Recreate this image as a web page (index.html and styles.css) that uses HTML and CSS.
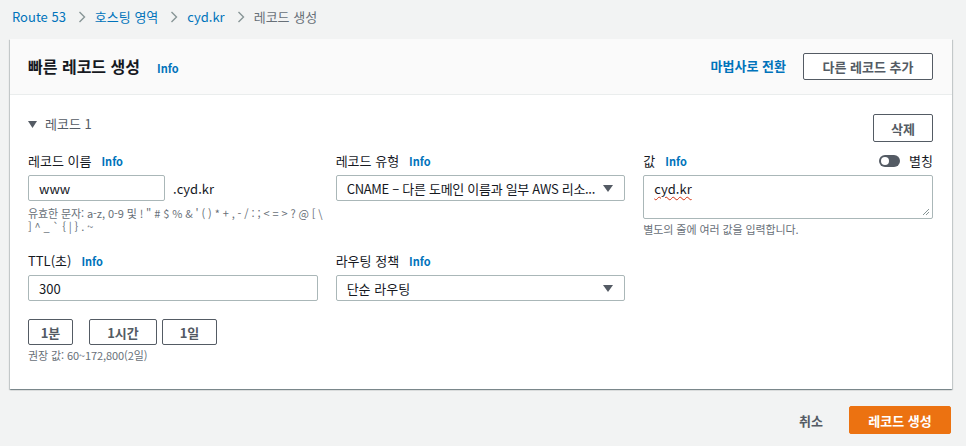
FILE: index.html
```html
<!DOCTYPE html>
<html lang="ko">
<head>
<meta charset="utf-8">
<title>레코드 생성</title>
<link rel="stylesheet" href="styles.css">
</head>
<body>
  <nav class="crumbs">
    <a class="crumb-link">Route 53</a>
    <svg class="chev" width="8" height="12" viewBox="0 0 8 12"><polyline points="1.5,1 6.5,6 1.5,11" fill="none" stroke="#879596" stroke-width="1.4"/></svg>
    <a class="crumb-link">호스팅 영역</a>
    <svg class="chev" width="8" height="12" viewBox="0 0 8 12"><polyline points="1.5,1 6.5,6 1.5,11" fill="none" stroke="#879596" stroke-width="1.4"/></svg>
    <a class="crumb-link">cyd.kr</a>
    <svg class="chev" width="8" height="12" viewBox="0 0 8 12"><polyline points="1.5,1 6.5,6 1.5,11" fill="none" stroke="#879596" stroke-width="1.4"/></svg>
    <span class="crumb-current">레코드 생성</span>
  </nav>

  <section class="card">
    <header class="card-head">
      <div class="title-wrap">
        <h1 class="title">빠른 레코드 생성</h1>
        <a class="info">Info</a>
      </div>
      <div class="head-actions">
        <a class="wizard-link">마법사로 전환</a>
        <button class="btn">다른 레코드 추가</button>
      </div>
    </header>

    <div class="card-body">
      <div class="record-head">
        <div class="record-toggle">
          <svg width="9" height="7" viewBox="0 0 9 7"><polygon points="0,0 9,0 4.5,7" fill="#545b64"/></svg>
          <span>레코드 1</span>
        </div>
        <button class="btn btn-del">삭제</button>
      </div>

      <div class="fields">
        <div class="field">
          <div class="label-row"><span class="label">레코드 이름</span><a class="info">Info</a></div>
          <div class="name-row">
            <div class="input input-name">www</div>
            <span class="suffix">.cyd.kr</span>
          </div>
          <p class="hint hint-chars">유효한 문자: a-z, 0-9 및 ! " # $ % &amp; ' ( ) * + , - / : ; &lt; = &gt; ? @ [ \<br>] ^ _ ` { | } . ~</p>
        </div>

        <div class="field">
          <div class="label-row"><span class="label">레코드 유형</span><a class="info">Info</a></div>
          <div class="select">
            <span class="select-text select-long">CNAME – 다른 도메인 이름과 일부 AWS 리소...</span>
            <svg class="caret" width="10" height="7" viewBox="0 0 10 7"><polygon points="0,0 10,0 5,7" fill="#545b64"/></svg>
          </div>
        </div>

        <div class="field">
          <div class="label-row label-row-split">
            <div class="label-group"><span class="label">값</span><a class="info">Info</a></div>
            <div class="alias">
              <span class="switch"><span class="knob"></span></span>
              <span class="label">별칭</span>
            </div>
          </div>
          <div class="textarea">
            <span class="misspelled">cyd.kr</span>
            <svg class="grip" width="8" height="8" viewBox="0 0 8 8"><path d="M7 1 L1 7 M7 4 L4 7" stroke="#879596" stroke-width="1"/></svg>
          </div>
          <p class="hint hint-value">별도의 줄에 여러 값을 입력합니다.</p>
        </div>

        <div class="field">
          <div class="label-row"><span class="label">TTL(초)</span><a class="info">Info</a></div>
          <div class="input">300</div>
          <div class="ttl-presets">
            <button class="btn btn-ttl btn-min">1분</button>
            <button class="btn btn-ttl btn-hour">1시간</button>
            <button class="btn btn-ttl btn-day">1일</button>
          </div>
          <p class="hint hint-ttl">권장 값: 60~172,800(2일)</p>
        </div>

        <div class="field">
          <div class="label-row"><span class="label">라우팅 정책</span><a class="info">Info</a></div>
          <div class="select">
            <span class="select-text">단순 라우팅</span>
            <svg class="caret" width="10" height="7" viewBox="0 0 10 7"><polygon points="0,0 10,0 5,7" fill="#545b64"/></svg>
          </div>
        </div>
      </div>
    </div>
  </section>

  <footer class="page-actions">
    <a class="cancel">취소</a>
    <button class="btn btn-primary">레코드 생성</button>
  </footer>
</body>
</html>
```

FILE: styles.css
```css
* {
  box-sizing: border-box;
}

body {
  margin: 0;
  background: #f2f3f3;
  font-family: "Noto Sans CJK KR", "Noto Sans", sans-serif;
  font-size: 13px;
  color: #16191f;
}

p {
  margin: 0;
}

button {
  font-family: inherit;
}

/* breadcrumbs */
.crumbs {
  height: 39px;
  padding: 7px 0 0 12px;
  display: flex;
  align-items: flex-start;
  line-height: 20px;
  font-size: 13px;
}

.crumb-link {
  color: #0073bb;
}

.crumb-current {
  color: #687078;
}

.chev {
  margin: 4px 9px 0 12px;
}

/* card */
.card {
  margin: 0 14px 0 10px;
  background: #fff;
  box-shadow: 0 1px 1px 0 rgba(0, 28, 36, 0.3), 1px 1px 1px 0 rgba(0, 28, 36, 0.15), -1px 1px 1px 0 rgba(0, 28, 36, 0.15);
}

.card-head {
  height: 56px;
  padding: 0 19px 0 18px;
  background: #fafafa;
  border-bottom: 1px solid #eaeded;
  display: flex;
  align-items: center;
  justify-content: space-between;
}

.title-wrap {
  display: flex;
  align-items: center;
  margin-top: -2px;
}

.title {
  margin: 0;
  font-size: 16px;
  font-weight: 700;
  line-height: 22px;
  color: #16191f;
}

.title-wrap .info {
  margin-left: 17px;
  margin-top: 4px;
}

.info {
  color: #0073bb;
  font-size: 11px;
  font-weight: 700;
  margin-left: 10px;
}

.head-actions {
  display: flex;
  align-items: center;
}

.wizard-link {
  color: #0073bb;
  font-weight: 700;
  margin-right: 17px;
  margin-top: -2px;
}

.btn {
  height: 27px;
  padding: 0 18px;
  border: 1px solid #545b64;
  border-radius: 2px;
  background: #fff;
  color: #545b64;
  font-size: 13px;
  font-weight: 700;
  line-height: 1;
}

.card-head .btn {
  width: 130px;
  padding: 0;
}

/* body */
.card-body {
  padding: 19px 19px 27px 18px;
}

.record-head {
  display: flex;
  justify-content: space-between;
  align-items: flex-start;
}

.record-toggle {
  display: flex;
  align-items: center;
  height: 20px;
  line-height: 20px;
  color: #545b64;
}

.record-toggle svg {
  margin-right: 8px;
}

.btn-del {
  width: 60px;
  height: 28px;
  padding: 0;
}

.fields {
  margin-top: 9px;
  display: grid;
  grid-template-columns: repeat(3, minmax(0, 1fr));
  column-gap: 18px;
  row-gap: 15px;
  align-items: start;
}

.label-row {
  height: 20px;
  line-height: 20px;
  display: flex;
  align-items: center;
  margin-bottom: 4px;
}

.label-row-split {
  justify-content: space-between;
}

.label-group {
  display: flex;
  align-items: center;
}

.label-group .info {
  margin-left: 10px;
}

.label {
  color: #16191f;
}

.alias {
  display: flex;
  align-items: center;
}

.switch {
  width: 21px;
  height: 12px;
  border-radius: 6px;
  background: #545b64;
  display: flex;
  align-items: center;
  padding-left: 2px;
  margin-right: 9px;
}

.knob {
  width: 8px;
  height: 8px;
  border-radius: 50%;
  background: #fff;
}

.input,
.select,
.textarea {
  height: 26px;
  border: 1px solid #aab7b8;
  border-radius: 2px;
  padding: 0 10px;
  display: flex;
  align-items: center;
  color: #16191f;
  background: #fff;
}

.name-row {
  display: flex;
  align-items: center;
}

.input-name {
  width: 137px;
}

.suffix {
  margin-left: 8px;
}

.select {
  justify-content: space-between;
  padding-right: 11px;
}

.select-text {
  white-space: nowrap;
  margin-right: 6px;
}

.select-long {
  letter-spacing: -0.3px;
}

.caret {
  flex-shrink: 0;
}

.textarea {
  position: relative;
  height: 44px;
  align-items: flex-start;
  padding-top: 3px;
}

.misspelled {
  text-decoration: underline wavy #d13212;
  text-decoration-thickness: 1px;
  text-underline-offset: 2px;
}

.grip {
  position: absolute;
  right: 2px;
  bottom: 2px;
}

.hint {
  font-size: 11px;
  line-height: 13px;
  color: #687078;
  letter-spacing: -0.1px;
}

.hint-chars {
  margin-top: 6px;
  white-space: nowrap;
}

.hint-value {
  margin-top: 4px;
}

.ttl-presets {
  display: flex;
  margin-top: 18px;
}

.btn-ttl {
  height: 26px;
  padding: 0;
  color: #545b64;
}

.btn-min {
  width: 45px;
}

.btn-hour {
  width: 68px;
  margin-left: 16px;
}

.btn-day {
  width: 55px;
  margin-left: 5px;
}

.hint-ttl {
  margin-top: 4px;
}

/* footer actions */
.page-actions {
  display: flex;
  justify-content: flex-end;
  align-items: center;
  margin-top: 17px;
  padding-right: 15px;
}

.cancel {
  color: #545b64;
  font-weight: 700;
  margin-right: 26px;
}

.btn-primary {
  width: 102px;
  height: 28px;
  padding: 0;
  background: #ec7211;
  border-color: #ec7211;
  color: #fff;
}
```
